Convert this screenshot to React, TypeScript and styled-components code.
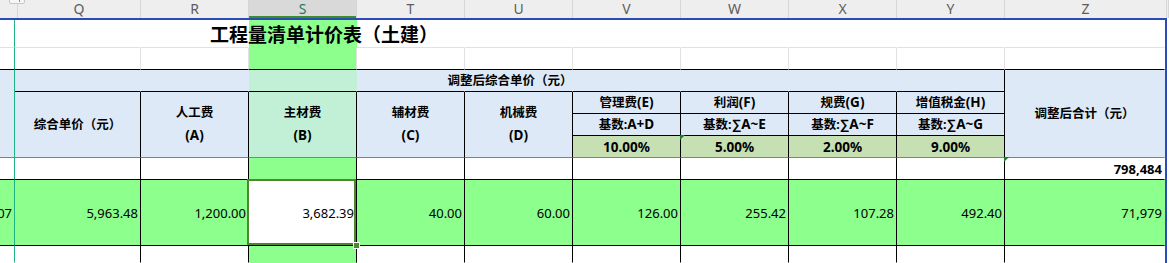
import React from "react";
import styled, { createGlobalStyle, css } from "styled-components";

const BLUE = "#dde9f6";
const MINT = "#c2f0d6";
const RATE = "#c6e0b4";
const GREEN = "#8cff8c";
const TEAL = "#1fb386";
const GRID = "#e1e1e1";
const BLACK = "#000000";
const SEL = "#4b8a2c";
const FRAME = "#2b4bb9";

const GlobalStyle = createGlobalStyle`
  html, body { margin: 0; padding: 0; background: #ffffff; }
  body {
    font-family: "Noto Sans", "Noto Sans CJK SC", sans-serif;
    overflow: hidden;
  }
`;

const Page = styled.div`
  width: 1169px;
  height: 263px;
  overflow: hidden;
  background: #ffffff;
`;

const ColumnBar = styled.div`
  display: grid;
  grid-template-columns: 18px 123px repeat(8, 108px) 162px 1fr;
  height: 18px;
  background: #eeeeee;
`;

const ColHead = styled.div<{ $active?: boolean }>`
  position: relative;
  box-sizing: border-box;
  border-right: 1px solid #d6d6d6;
  text-align: center;
  font-family: "Noto Sans", sans-serif;
  font-size: 14px;
  line-height: 17px;
  color: #5c5c5c;
  ${(p) =>
    p.$active &&
    css`
      background: #d9d9d9;
      color: #1f7a5a;
      box-shadow: inset 0 -2px 0 #3f8c2c;
    `}
`;

const CornerTab = styled.div`
  position: absolute;
  left: 9px;
  top: -6px;
  width: 14px;
  height: 8px;
  border: 1px solid #c8c8c8;
  border-radius: 2px;
  background: #f6f6f6;
  &::after {
    content: "";
    position: absolute;
    left: 9px;
    top: 4px;
    width: 1px;
    height: 3px;
    background: #8a8a8a;
  }
`;

const Sheet = styled.div`
  position: relative;
  display: grid;
  grid-template-columns: 15px 126px repeat(8, 108px) 160px;
  grid-template-rows: 28px repeat(6, 22px) 66px 17px;
  width: max-content;
  border-top: 2px solid ${FRAME};
  border-right: 2px solid ${FRAME};
`;

type CellProps = {
  $c: string;
  $r: string;
  $bg?: string;
  $rb?: string;
  $bb?: string;
  $align?: "left" | "center" | "right";
  $bold?: boolean;
  $flag?: boolean;
};

const Cell = styled.div<CellProps>`
  position: relative;
  grid-column: ${(p) => p.$c};
  grid-row: ${(p) => p.$r};
  box-sizing: border-box;
  min-width: 0;
  background: ${(p) => p.$bg ?? "transparent"};
  border-right: 1px solid ${(p) => p.$rb ?? "transparent"};
  border-bottom: 1px solid ${(p) => p.$bb ?? "transparent"};
  display: flex;
  flex-direction: column;
  justify-content: center;
  align-items: ${(p) =>
    p.$align === "right" ? "flex-end" : p.$align === "left" ? "flex-start" : "center"};
  padding: 0 2px;
  color: #000000;
  font-size: 13px;
  font-weight: ${(p) => (p.$bold ? 700 : 400)};
  line-height: 22px;
  white-space: nowrap;
  overflow: visible;
  ${(p) =>
    p.$flag &&
    css`
      &::before {
        content: "";
        position: absolute;
        top: -1px;
        left: -1px;
        border-style: solid;
        border-width: 5px 5px 0 0;
        border-color: #1c7d2c transparent transparent transparent;
      }
    `}
`;

const HeadCell = styled(Cell)`
  font-size: 12.5px;
  font-weight: 700;
`;

const Line = styled.span`
  display: block;
  line-height: 22px;
`;

const Latin = styled.span`
  font-family: "Noto Sans", sans-serif;
  font-size: 13.5px;
`;

const Sigma = styled.span`
  font-family: "Liberation Sans", "DejaVu Sans", sans-serif;
  font-size: 13.5px;
`;

const Title = styled.div`
  position: relative;
  z-index: 1;
  grid-column: 2 / -1;
  grid-row: 1;
  display: flex;
  align-items: center;
  padding-left: 195px;
  font-size: 19px;
  font-weight: 700;
  color: #000000;
  white-space: nowrap;
  pointer-events: none;
`;

const Band = styled.div`
  position: relative;
  z-index: 1;
  grid-column: 2 / 11;
  grid-row: 3;
  display: flex;
  align-items: center;
  justify-content: center;
  font-size: 12.5px;
  font-weight: 700;
  line-height: 22px;
  color: #000000;
  pointer-events: none;
`;

const SelectedCell = styled(Cell)`
  z-index: 2;
  &::before {
    content: "";
    position: absolute;
    top: -1px;
    left: -2px;
    right: 0;
    bottom: 0;
    border: 2px solid ${SEL};
    pointer-events: none;
  }
  &::after {
    content: "";
    position: absolute;
    right: -3px;
    bottom: -3px;
    width: 5px;
    height: 5px;
    background: ${SEL};
    outline: 1px solid #ffffff;
  }
`;

const letters = ["Q", "R", "S", "T", "U", "V", "W", "X", "Y", "Z"];
const colOf = (i: number) => `${i + 2}`;

const costHeads: [string, string][] = [
  ["综合单价（元）", ""],
  ["人工费", "(A)"],
  ["主材费", "(B)"],
  ["辅材费", "(C)"],
  ["机械费", "(D)"],
];

const fees = [
  { name: "管理费", code: "(E)", sum: false, base: "A+D", rate: "10.00%", flag: false },
  { name: "利润", code: "(F)", sum: true, base: "A~E", rate: "5.00%", flag: true },
  { name: "规费", code: "(G)", sum: true, base: "A~F", rate: "2.00%", flag: false },
  { name: "增值税金", code: "(H)", sum: true, base: "A~G", rate: "9.00%", flag: false },
];

const values = [
  "5,963.48",
  "1,200.00",
  "3,682.39",
  "40.00",
  "60.00",
  "126.00",
  "255.42",
  "107.28",
  "492.40",
  "71,979",
];

export default function App() {
  return (
    <>
      <GlobalStyle />
      <Page>
        <ColumnBar>
          <ColHead>
            <CornerTab />
          </ColHead>
          {letters.map((l) => (
            <ColHead key={l} $active={l === "S"}>
              {l}
            </ColHead>
          ))}
          <ColHead />
        </ColumnBar>

        <Sheet>
          {/* row 1: title */}
          <Cell $c="1" $r="1" $bg="#fff" $rb={TEAL} $bb={GRID} />
          {letters.map((l, i) => (
            <Cell
              key={"r1" + l}
              $c={colOf(i)}
              $r="1"
              $bg={l === "S" ? GREEN : "#fff"}
              $bb={l === "S" ? undefined : GRID}
            />
          ))}
          <Title>工程量清单计价表（土建）</Title>

          {/* row 2: blank */}
          <Cell $c="1" $r="2" $bg="#fff" $rb={TEAL} $bb={BLACK} />
          {letters.map((l, i) => (
            <Cell
              key={"r2" + l}
              $c={colOf(i)}
              $r="2"
              $bg={l === "S" ? GREEN : "#fff"}
              $rb={l === "Z" ? undefined : GRID}
              $bb={BLACK}
            />
          ))}

          {/* rows 3-6: header */}
          <Cell $c="1" $r="3 / 7" $bg={BLUE} $rb={TEAL} $bb={TEAL} />
          {letters.slice(0, 9).map((l, i) => (
            <Cell
              key={"r3" + l}
              $c={colOf(i)}
              $r="3"
              $bg={l === "S" ? MINT : BLUE}
              $rb={l === "Y" ? BLACK : undefined}
              $bb={BLACK}
            />
          ))}
          <Band>调整后综合单价（元）</Band>
          <HeadCell $c="11" $r="3 / 7" $bg={BLUE} $bb={TEAL}>
            调整后合计（元）
          </HeadCell>

          {costHeads.map(([cn, code], i) => (
            <HeadCell
              key={"cost" + i}
              $c={colOf(i)}
              $r="4 / 7"
              $bg={letters[i] === "S" ? MINT : BLUE}
              $rb={BLACK}
              $bb={TEAL}
            >
              <Line>{cn}</Line>
              {code && (
                <Line>
                  <Latin>{code}</Latin>
                </Line>
              )}
            </HeadCell>
          ))}

          {fees.map((f, k) => (
            <React.Fragment key={f.name}>
              <HeadCell $c={colOf(5 + k)} $r="4" $bg={BLUE} $rb={BLACK} $bb={BLACK}>
                <span>
                  {f.name}
                  <Latin>{f.code}</Latin>
                </span>
              </HeadCell>
              <HeadCell $c={colOf(5 + k)} $r="5" $bg={BLUE} $rb={BLACK} $bb={BLACK}>
                <span>
                  基数:
                  {f.sum && <Sigma>∑</Sigma>}
                  <Latin>{f.base}</Latin>
                </span>
              </HeadCell>
              <HeadCell
                $c={colOf(5 + k)}
                $r="6"
                $bg={RATE}
                $rb={BLACK}
                $bb={TEAL}
                $flag={f.flag}
              >
                <Latin>{f.rate}</Latin>
              </HeadCell>
            </React.Fragment>
          ))}

          {/* row 7: total */}
          <Cell $c="1" $r="7" $bg="#fff" $rb={TEAL} $bb={BLACK} />
          {letters.map((l, i) =>
            l === "Z" ? (
              <Cell
                key={"r7" + l}
                $c={colOf(i)}
                $r="7"
                $bg="#fff"
                $bb={BLACK}
                $align="right"
                $bold
                $flag
              >
                798,484
              </Cell>
            ) : (
              <Cell
                key={"r7" + l}
                $c={colOf(i)}
                $r="7"
                $bg={l === "S" ? GREEN : "#fff"}
                $rb={BLACK}
                $bb={BLACK}
              />
            )
          )}

          {/* row 8: data */}
          <Cell $c="1" $r="8" $bg={GREEN} $rb={TEAL} $bb={BLACK} $align="right">
            07
          </Cell>
          {letters.map((l, i) =>
            l === "S" ? (
              <SelectedCell
                key={"r8" + l}
                $c={colOf(i)}
                $r="8"
                $bg="#fff"
                $rb={BLACK}
                $bb={BLACK}
                $align="right"
              >
                {values[i]}
              </SelectedCell>
            ) : (
              <Cell
                key={"r8" + l}
                $c={colOf(i)}
                $r="8"
                $bg={GREEN}
                $rb={l === "Z" ? undefined : BLACK}
                $bb={BLACK}
                $align="right"
              >
                {values[i]}
              </Cell>
            )
          )}

          {/* row 9: blank */}
          <Cell $c="1" $r="9" $bg="#fff" $rb={TEAL} />
          {letters.map((l, i) => (
            <Cell
              key={"r9" + l}
              $c={colOf(i)}
              $r="9"
              $bg={l === "S" ? GREEN : "#fff"}
              $rb={l === "Z" ? undefined : BLACK}
            />
          ))}
        </Sheet>
      </Page>
    </>
  );
}
